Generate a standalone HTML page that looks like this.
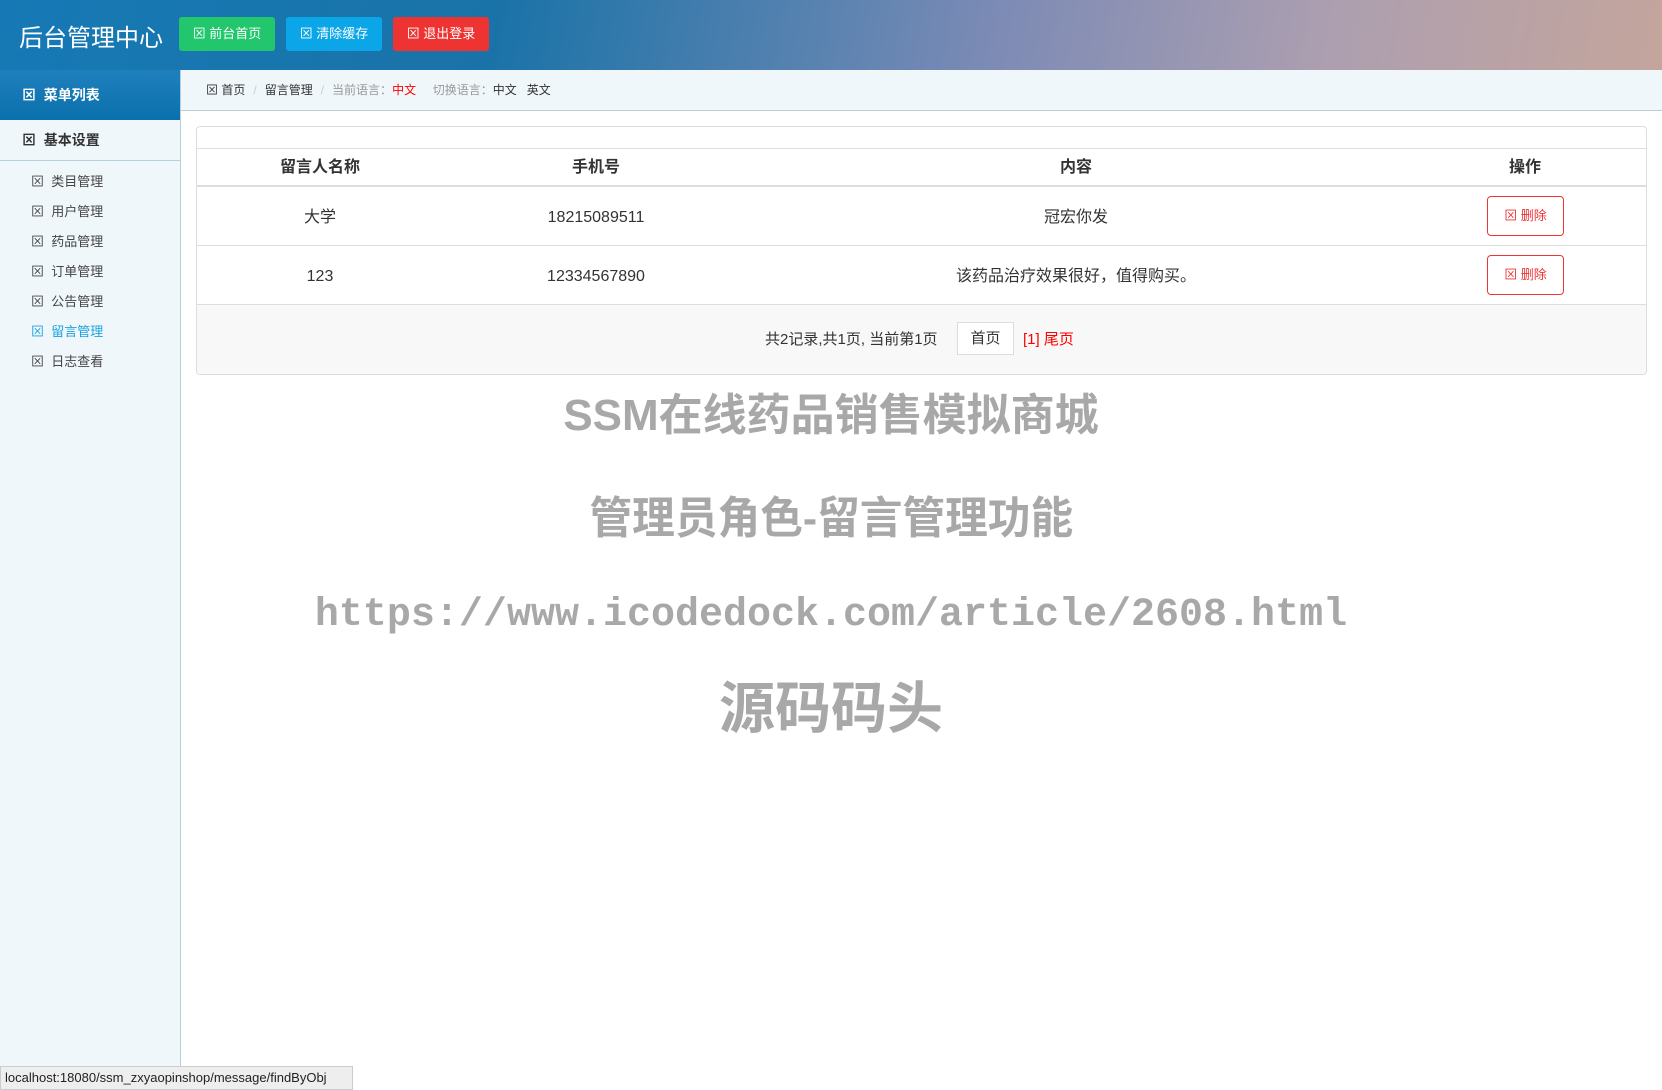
<!DOCTYPE html>
<html><head><meta charset="utf-8"><style>
*{margin:0;padding:0;box-sizing:border-box}
body{width:1662px;height:1090px;position:relative;overflow:hidden;background:#fff;font-family:"Liberation Sans","Noto Sans CJK SC",sans-serif;color:#333}
.hd{position:absolute;left:0;top:0;width:1662px;height:70px;background:linear-gradient(100deg,#1679b5 0%,#1a73a8 30%,#7d8bb5 60%,#ad9fb0 80%,#c4a59c 100%)}
.title{position:absolute;left:19px;top:18px;font-size:24px;color:#fff}
.btn{position:absolute;top:17px;height:34px;width:96px;border-radius:3px;color:#fff;font-size:13px;line-height:34px;text-align:center}
.sb{position:absolute;left:0;top:70px;width:181px;height:1020px;background:#f0f7fb;border-right:1px solid #b5cfdd}
.mh{height:50px;background:linear-gradient(#1f80bd,#0a70ab);color:#fff;font-weight:bold;font-size:14px;line-height:50px;padding-left:22px}
.bs{height:41px;border-bottom:1px solid #b5cfdd;font-weight:bold;font-size:14px;line-height:40px;padding-left:22px}
.it{position:absolute;left:31px;font-size:13px;color:#444}
.bc{position:absolute;left:181px;top:70px;width:1481px;height:41px;background:#f0f7fb;border-bottom:1px solid #b5cfdd;font-size:12px;line-height:40px;padding-left:25px;color:#333}
.g{color:#999}.sep{color:#ccc;margin:0 8px}
.pn{position:absolute;left:196px;top:126px;width:1451px;height:249px;border:1px solid #ddd;border-radius:4px;overflow:hidden}
.row{position:absolute;left:0;width:1449px}
.c{position:absolute;top:0;text-align:center;transform:translateX(-50%);white-space:nowrap}
.del{position:absolute;left:1290px;width:77px;height:40px;border:1px solid #e33;border-radius:4px;color:#e33;font-size:13px;line-height:38px;text-align:center}
.wm{position:absolute;left:0;width:1662px;text-align:center;color:#a8a8a8;font-weight:bold}
.wm span{display:inline-block}
.st{position:absolute;left:0;top:1066px;width:353px;height:24px;background:#eee;border:1px solid #ccc;font-size:13px;line-height:22px;padding-left:4px;color:#222}
</style></head><body>
<div class="hd">
<div class="title">后台管理中心</div>
<div class="btn" style="left:179px;background:#22c76d">⊠ 前台首页</div>
<div class="btn" style="left:286px;background:#0aa6e8">⊠ 清除缓存</div>
<div class="btn" style="left:393px;background:#ee3333">⊠ 退出登录</div>
</div>
<div class="sb">
<div class="mh">⊠ &nbsp;菜单列表</div>
<div class="bs">⊠ &nbsp;基本设置</div>
<div class="it" style="top:101px">⊠ &nbsp;类目管理</div>
<div class="it" style="top:131px">⊠ &nbsp;用户管理</div>
<div class="it" style="top:161px">⊠ &nbsp;药品管理</div>
<div class="it" style="top:191px">⊠ &nbsp;订单管理</div>
<div class="it" style="top:221px">⊠ &nbsp;公告管理</div>
<div class="it" style="top:251px;color:#1aa3e0">⊠ &nbsp;留言管理</div>
<div class="it" style="top:281px">⊠ &nbsp;日志查看</div>
</div>
<div class="bc">⊠ 首页<span class="sep">/</span>留言管理<span class="sep">/</span><span class="g">当前语言：</span><span style="color:red">中文</span>&nbsp;&nbsp;&nbsp;&nbsp;&nbsp;<span class="g">切换语言：</span>中文&nbsp;&nbsp;&nbsp;英文</div>
<div class="pn">
<div class="row" style="top:21px;height:39px;border-top:1px solid #ddd;border-bottom:2px solid #ddd;font-weight:bold;font-size:16px;line-height:37px">
<div class="c" style="left:123px">留言人名称</div><div class="c" style="left:399px">手机号</div><div class="c" style="left:879px">内容</div><div class="c" style="left:1328px">操作</div></div>
<div class="row" style="top:60px;height:59px;border-bottom:1px solid #ddd;font-size:16px;line-height:62px">
<div class="c" style="left:123px">大学</div><div class="c" style="left:399px">18215089511</div><div class="c" style="left:879px">冠宏你发</div><div class="del" style="top:9px">⊠ 删除</div></div>
<div class="row" style="top:119px;height:59px;border-bottom:1px solid #ddd;font-size:16px;line-height:62px">
<div class="c" style="left:123px">123</div><div class="c" style="left:399px">12334567890</div><div class="c" style="left:879px">该药品治疗效果很好，值得购买。</div><div class="del" style="top:9px">⊠ 删除</div></div>
<div class="row" style="top:178px;height:71px;background:#f8f8f8;font-size:15px">
<div style="position:absolute;left:568px;top:25px;line-height:20px">共2记录,共1页, 当前第1页</div>
<div style="position:absolute;left:760px;top:17px;width:57px;height:33px;border:1px solid #ddd;background:#fff;text-align:center;line-height:31px">首页</div>
<div style="position:absolute;left:826px;top:25px;line-height:20px;color:red">[1] 尾页</div>
</div>
</div>
<div class="wm" style="top:390px;font-size:44px;line-height:52px"><span>SSM在线药品销售模拟商城</span></div>
<div class="wm" style="top:493px;font-size:44px;line-height:52px"><span style="transform:scaleX(0.97)">管理员角色-留言管理功能</span></div>
<div class="wm" style="top:590px;font-size:40px;line-height:52px;font-family:'Liberation Mono',monospace"><span>https://www.icodedock.com/article/2608.html</span></div>
<div class="wm" style="top:677px;font-size:56px;line-height:64px"><span>源码码头</span></div>
<div class="st">localhost:18080/ssm_zxyaopinshop/message/findByObj</div>
</body></html>
